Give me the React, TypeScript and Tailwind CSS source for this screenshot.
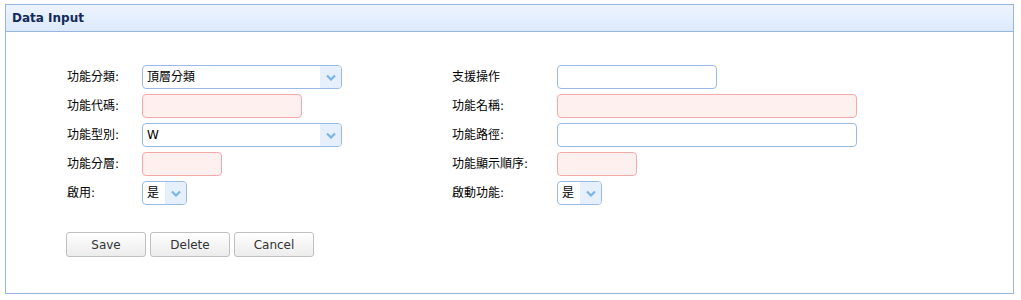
import React from "react";

const font = { fontFamily: '"DejaVu Sans", Verdana, "Noto Sans CJK TC", sans-serif' };

function Chevron() {
  return (
    <svg width="10" height="7" viewBox="0 0 10 7">
      <path d="M1 1.5 L5 5.5 L9 1.5" fill="none" stroke="#7ab4e6" strokeWidth="2.2" />
    </svg>
  );
}

function Select({ w, value }: { w: string; value: string }) {
  return (
    <div className={`${w} h-[24px] flex items-stretch border border-[#9bb9e6] rounded-[4px] bg-white overflow-hidden`}>
      <div className="flex-1 flex items-center pl-[4px] text-[12px] text-black">{value}</div>
      <div className="w-[21px] bg-[#e6effc] flex items-center justify-center">
        <Chevron />
      </div>
    </div>
  );
}

function Input({ w, req }: { w: string; req?: boolean }) {
  return (
    <div
      className={`${w} h-[24px] rounded-[4px] border ${
        req ? "border-[#f6a9a9] bg-[#fff0f0]" : "border-[#9bb9e6] bg-white"
      }`}
    />
  );
}

function Cell({ label, lw, cw, children }: { label: string; lw: string; cw: string; children: React.ReactNode }) {
  return (
    <div className={`flex items-center ${cw}`}>
      <div className={`${lw} text-[12px] text-black`}>{label}</div>
      {children}
    </div>
  );
}

function Button({ children }: { children: React.ReactNode }) {
  return (
    <div className="w-[80px] h-[25px] flex items-center justify-center rounded-[3px] border border-[#c0c0c0] bg-gradient-to-b from-white to-[#ececec] text-[12px] text-[#333]">
      {children}
    </div>
  );
}

export default function App() {
  return (
    <div className="w-[1021px] h-[300px] bg-white pt-[4px] pl-[5px]" style={font}>
      <div className="w-[1009px] h-[290px] border border-[#98b5e3] flex flex-col">
        <div className="h-[27px] border-b border-[#98b5e3] bg-gradient-to-b from-[#edf4fe] to-[#dce9fc] flex items-center pl-[6px] text-[12px] font-bold text-[#122b5a]">
          Data Input
        </div>
        <div className="pl-[61px] pt-[33px] flex flex-col gap-[5px]">
          <div className="flex">
            <Cell label="功能分類:" lw="w-[75px]" cw="w-[385px]">
              <Select w="w-[200px]" value="頂層分類" />
            </Cell>
            <Cell label="支援操作" lw="w-[105px]" cw="">
              <Input w="w-[160px]" />
            </Cell>
          </div>
          <div className="flex">
            <Cell label="功能代碼:" lw="w-[75px]" cw="w-[385px]">
              <Input w="w-[160px]" req />
            </Cell>
            <Cell label="功能名稱:" lw="w-[105px]" cw="">
              <Input w="w-[300px]" req />
            </Cell>
          </div>
          <div className="flex">
            <Cell label="功能型別:" lw="w-[75px]" cw="w-[385px]">
              <Select w="w-[200px]" value="W" />
            </Cell>
            <Cell label="功能路徑:" lw="w-[105px]" cw="">
              <Input w="w-[300px]" />
            </Cell>
          </div>
          <div className="flex">
            <Cell label="功能分層:" lw="w-[75px]" cw="w-[385px]">
              <Input w="w-[80px]" req />
            </Cell>
            <Cell label="功能顯示順序:" lw="w-[105px]" cw="">
              <Input w="w-[80px]" req />
            </Cell>
          </div>
          <div className="flex">
            <Cell label="啟用:" lw="w-[75px]" cw="w-[385px]">
              <Select w="w-[45px]" value="是" />
            </Cell>
            <Cell label="啟動功能:" lw="w-[105px]" cw="">
              <Select w="w-[45px]" value="是" />
            </Cell>
          </div>
          <div className="flex gap-[4px] mt-[22px] -ml-[1px]">
            <Button>Save</Button>
            <Button>Delete</Button>
            <Button>Cancel</Button>
          </div>
        </div>
      </div>
    </div>
  );
}
